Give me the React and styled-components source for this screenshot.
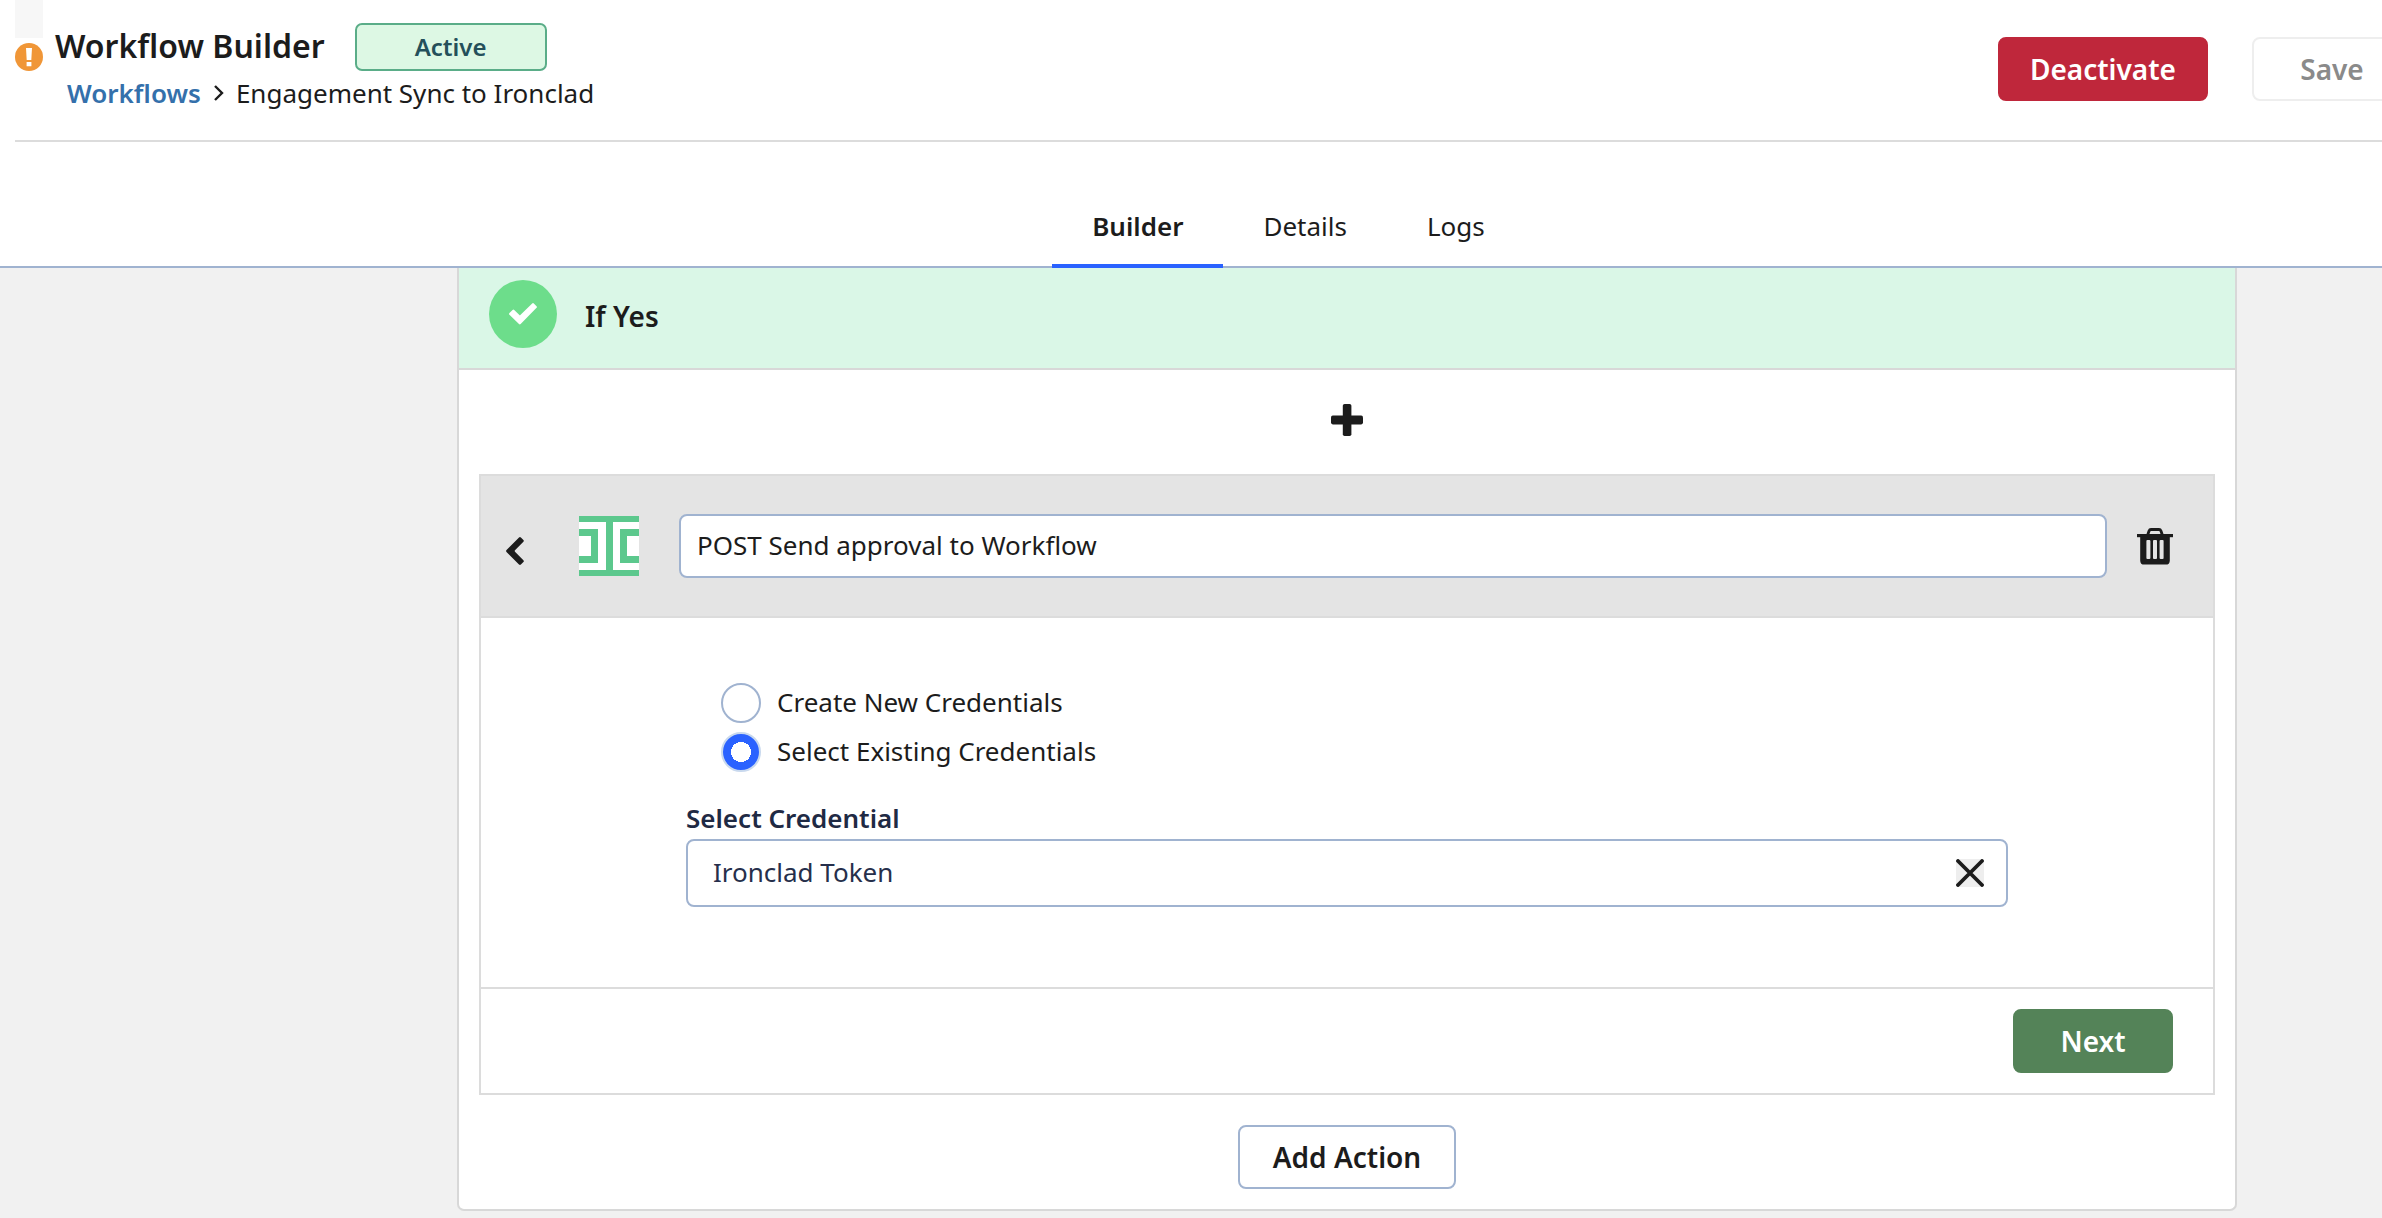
import React, { useState } from "react";
import styled, { createGlobalStyle } from "styled-components";

const ink = "#1c1c1c";
const line = "#dcdcdc";
const field = "#a0b3d0";
const blue = "#2a62ff";

const GlobalStyle = createGlobalStyle`
  *, *::before, *::after { box-sizing: border-box; }
  html, body { margin: 0; min-height: 100%; background: #f1f1f1; }
  body {
    color: ${ink};
    font-family: "Noto Sans", sans-serif;
    font-size: 26px;
    line-height: 36px;
    overflow-x: hidden;
  }
  button, input { font: inherit; color: inherit; margin: 0; }
  svg { display: block; flex: none; }
`;

const TopArea = styled.header`
  background: #fff;
  border-bottom: 2px solid ${field};
`;

const TitleBar = styled.div`
  display: flex;
  justify-content: space-between;
  margin-left: 15px;
  height: 142px;
  border-bottom: 2px solid ${line};
`;

const TitleGroup = styled.div`
  display: flex;
  gap: 12px;
`;

const Marker = styled.div`
  display: flex;
  flex-direction: column;
  gap: 5px;
  width: 28px;
`;

const MarkerTab = styled.span`
  height: 38px;
  background: #f7f7f7;
`;

const Titles = styled.div`
  padding-top: 23px;
`;

const TitleRow = styled.div`
  display: flex;
  align-items: center;
  gap: 30px;
`;

const Title = styled.h1`
  margin: 0;
  padding-bottom: 2px;
  font-size: 32px;
  font-weight: 600;
  line-height: 46px;
`;

const Badge = styled.span`
  width: 192px;
  height: 48px;
  border: 2px solid #5aad88;
  border-radius: 7px;
  background: #ddf8e4;
  color: #24505a;
  font-size: 24px;
  font-weight: 600;
  line-height: 44px;
  text-align: center;
`;

const Crumbs = styled.nav`
  display: flex;
  align-items: center;
  gap: 12px;
  padding: 4px 0 0 12px;
`;

const CrumbLink = styled.a`
  color: #3470ab;
  font-weight: 600;
  text-decoration: none;
`;

const Actions = styled.div`
  display: flex;
  gap: 44px;
  margin-right: -30px;
  padding-top: 37px;
`;

const looks = {
  danger: "padding:0 30px;background:#bf273b;border-color:#bf273b;color:#fff;",
  success: "padding:0 32px;background:#548358;border-color:#548358;color:#fff;",
  outline: `padding:0 33px;background:#fff;border-color:${field};color:${ink};`,
  disabled: "padding:0 32px;background:#fff;border-color:#eee;color:#8a8a8a;",
};

const Button = styled.button`
  height: 64px;
  min-width: 160px;
  border: 2px solid;
  border-radius: 8px;
  font-size: 28px;
  font-weight: 600;
  line-height: 36px;
  white-space: nowrap;
  cursor: pointer;
  ${(p) => looks[p.$look]}
`;

const Tabs = styled.div`
  display: flex;
  justify-content: center;
  padding: 50px 0 0 195px;
  margin-bottom: -2px;
`;

const Tab = styled.button`
  height: 76px;
  padding: 0 40px 4px;
  border: 0;
  border-bottom: 4px solid ${(p) => (p.$active ? blue : "transparent")};
  background: none;
  font-weight: ${(p) => (p.$active ? 600 : 400)};
  cursor: pointer;
`;

const Main = styled.main`
  padding: 0 145px 7px 457px;
`;

const Card = styled.section`
  border: 2px solid #d8d8d8;
  border-top: 0;
  border-radius: 0 0 7px 7px;
  background: #fff;
`;

const BranchHeader = styled.div`
  display: flex;
  align-items: center;
  gap: 28px;
  padding: 12px 30px 20px;
  border-bottom: 2px solid #d8d8d8;
  background: #daf7e7;
`;

const Check = styled.span`
  display: grid;
  place-items: center;
  width: 68px;
  height: 68px;
  border-radius: 50%;
  background: #6ddd8b;
`;

const BranchTitle = styled.h2`
  margin: 0;
  padding-top: 4px;
  font-size: 28px;
  font-weight: 600;
  line-height: 36px;
`;

const IconButton = styled.button`
  display: grid;
  place-items: center;
  padding: 0;
  border: 0;
  background: ${(p) => p.$fill || "none"};
  cursor: pointer;
`;

const AddRow = styled.div`
  display: flex;
  justify-content: center;
  padding: ${(p) => (p.$roomy ? "34px 0 38px" : "30px 0 20px")};
`;

const Panel = styled.article`
  margin: 0 20px;
  border: 2px solid ${line};
`;

const PanelHeader = styled.div`
  display: flex;
  align-items: center;
  height: 142px;
  padding: 0 40px 0 25px;
  gap: 30px;
  border-bottom: 2px solid ${line};
  background: #e4e4e4;
`;

const Lead = styled.div`
  display: flex;
  align-items: center;
  gap: 55px;
  padding-right: 10px;
`;

const BackWrap = styled.div`
  padding-top: 9px;
`;

const NameInput = styled.input`
  flex: 1;
  min-width: 0;
  height: 64px;
  padding: 0 16px 2px;
  border: 2px solid ${field};
  border-radius: 8px;
  background: #fff;
`;

const PanelBody = styled.div`
  padding: 65px 205px 80px;
`;

const Choices = styled.div`
  display: flex;
  flex-direction: column;
  gap: 9px;
  padding: 0 35px 28px;
`;

const Choice = styled.label`
  display: flex;
  align-items: center;
  gap: 16px;
  height: 40px;
`;

const ChoiceText = styled.span`
  padding-bottom: 3px;
`;

const Radio = styled.input`
  appearance: none;
  width: 40px;
  height: 40px;
  border: 2px solid ${field};
  border-radius: 50%;
  background: #fff;
  &:checked {
    border-color: #c9d9ee;
    background: radial-gradient(circle, #fff 0 10px, ${blue} 10px);
  }
`;

const FieldLabel = styled.label`
  display: block;
  margin-bottom: 3px;
  color: #1f2a44;
  font-weight: 600;
`;

const Combo = styled.div`
  display: flex;
  align-items: center;
  height: 68px;
  padding: 0 22px 0 25px;
  border: 2px solid ${field};
  border-radius: 8px;
  background: #fff;
`;

const ComboInput = styled.input`
  flex: 1;
  min-width: 0;
  padding: 0 0 2px;
  border: 0;
  outline: 0;
  background: none;
  color: #262f4b;
`;

const PanelFooter = styled.div`
  display: flex;
  justify-content: flex-end;
  padding: 20px 40px;
  border-top: 2px solid ${line};
`;

const WarningIcon = () => (
  <svg width="28" height="28" viewBox="0 0 28 28" aria-hidden="true">
    <circle cx="14" cy="14" r="14" fill="#f09637" />
    <path d="M11 5h6l-.7 12h-4.6zM11.6 19h4.8v4.2h-4.8z" fill="#fff" />
  </svg>
);

const CrumbArrow = () => (
  <svg width="11" height="16" viewBox="0 0 11 16" aria-hidden="true">
    <path d="M2 1 9 8 2 15" fill="none" stroke={ink} strokeWidth="2.4" />
  </svg>
);

const CheckIcon = () => (
  <svg width="28" height="22" viewBox="0 0 28 22" aria-hidden="true">
    <path
      d="M4.4 7.8 10.9 14 24 1.3 26.7 4 10.8 20.2 1.3 10.9z"
      fill="#fff"
      stroke="#fff"
      strokeWidth="2.4"
      strokeLinejoin="round"
    />
  </svg>
);

const PlusIcon = () => (
  <svg width="32" height="32" viewBox="0 0 32 32" aria-hidden="true">
    <rect x="11.8" width="8.6" height="32" rx="1.8" fill={ink} />
    <rect y="11.6" width="32" height="8.8" rx="1.8" fill={ink} />
  </svg>
);

const BackIcon = () => (
  <svg width="18" height="28" viewBox="0 0 18 28" aria-hidden="true">
    <path d="M13 .4q1-.8 1.9 0l2.5 2.5q.9.9 0 1.8L9 13.3q-.6.7 0 1.4l8.4 8.6q.9.9 0 1.8l-2.5 2.5q-.9.8-1.9 0L.5 14.9q-.8-.9 0-1.8z" fill={ink} />
  </svg>
);

const Logo = () => (
  <svg width="60" height="60" viewBox="0 0 60 60" aria-hidden="true">
    <rect width="60" height="60" fill="#fff" />
    <path
      d="M0 0h60v6H34v48h26v6H0v-6h27V6H0zM0 13h19v34H0v-7h12V20H0zM60 13H41v34h19v-7H48V20h12z"
      fill="#5cc88d"
    />
  </svg>
);

const TrashIcon = () => (
  <svg width="36" height="37" viewBox="0 0 36 37" aria-hidden="true">
    <path d="M10.5 7.5 12 3q.6-1.5 2-1.5h8q1.4 0 2 1.5l1.5 4.5" fill="none" stroke={ink} strokeWidth="2.8" />
    <rect y="6" width="36" height="3.2" fill={ink} />
    <path d="M3.2 8h29.6v24.4q0 4.2-4.2 4.2H7.4q-4.2 0-4.2-4.2z" fill={ink} />
    <g fill="#e4e4e4">
      <rect x="9.4" y="12" width="4" height="19" rx="1" />
      <rect x="16" y="12" width="4" height="19" rx="1" />
      <rect x="22.6" y="12" width="4" height="19" rx="1" />
    </g>
  </svg>
);

const ClearIcon = () => (
  <svg width="28" height="28" viewBox="0 0 28 28" aria-hidden="true">
    <path d="M2 2l24 24M26 2 2 26" stroke={ink} strokeWidth="3.8" strokeLinecap="round" />
  </svg>
);

const tabNames = ["Builder", "Details", "Logs"];
const modes = ["Create New Credentials", "Select Existing Credentials"];

export default function App() {
  const [tab, setTab] = useState("Builder");
  const [name, setName] = useState("POST Send approval to Workflow");
  const [mode, setMode] = useState(modes[1]);
  const [credential, setCredential] = useState("Ironclad Token");

  return (
    <>
      <GlobalStyle />
      <TopArea>
        <TitleBar>
          <TitleGroup>
            <Marker>
              <MarkerTab />
              <WarningIcon />
            </Marker>
            <Titles>
              <TitleRow>
                <Title>Workflow Builder</Title>
                <Badge>Active</Badge>
              </TitleRow>
              <Crumbs aria-label="Breadcrumb">
                <CrumbLink href="#workflows">Workflows</CrumbLink>
                <CrumbArrow />
                <span>Engagement Sync to Ironclad</span>
              </Crumbs>
            </Titles>
          </TitleGroup>
          <Actions>
            <Button type="button" $look="danger">Deactivate</Button>
            <Button type="button" $look="disabled" disabled>Save</Button>
          </Actions>
        </TitleBar>
        <Tabs role="tablist">
          {tabNames.map((t) => (
            <Tab key={t} type="button" role="tab" aria-selected={t === tab} $active={t === tab} onClick={() => setTab(t)}>
              {t}
            </Tab>
          ))}
        </Tabs>
      </TopArea>
      <Main>
        <Card>
          <BranchHeader>
            <Check><CheckIcon /></Check>
            <BranchTitle>If Yes</BranchTitle>
          </BranchHeader>
          <AddRow $roomy>
            <IconButton type="button" aria-label="Add step"><PlusIcon /></IconButton>
          </AddRow>
          <Panel>
            <PanelHeader>
              <Lead>
                <BackWrap>
                  <IconButton type="button" aria-label="Back"><BackIcon /></IconButton>
                </BackWrap>
                <Logo />
              </Lead>
              <NameInput aria-label="Action name" value={name} onChange={(e) => setName(e.target.value)} />
              <IconButton type="button" aria-label="Delete action"><TrashIcon /></IconButton>
            </PanelHeader>
            <PanelBody>
              <Choices role="radiogroup" aria-label="Credentials">
                {modes.map((m) => (
                  <Choice key={m}>
                    <Radio type="radio" name="mode" checked={m === mode} onChange={() => setMode(m)} />
                    <ChoiceText>{m}</ChoiceText>
                  </Choice>
                ))}
              </Choices>
              <FieldLabel htmlFor="credential">Select Credential</FieldLabel>
              <Combo>
                <ComboInput id="credential" value={credential} onChange={(e) => setCredential(e.target.value)} />
                <IconButton type="button" aria-label="Clear credential" $fill="#eee" onClick={() => setCredential("")}>
                  <ClearIcon />
                </IconButton>
              </Combo>
            </PanelBody>
            <PanelFooter>
              <Button type="button" $look="success">Next</Button>
            </PanelFooter>
          </Panel>
          <AddRow>
            <Button type="button" $look="outline">Add Action</Button>
          </AddRow>
        </Card>
      </Main>
    </>
  );
}
